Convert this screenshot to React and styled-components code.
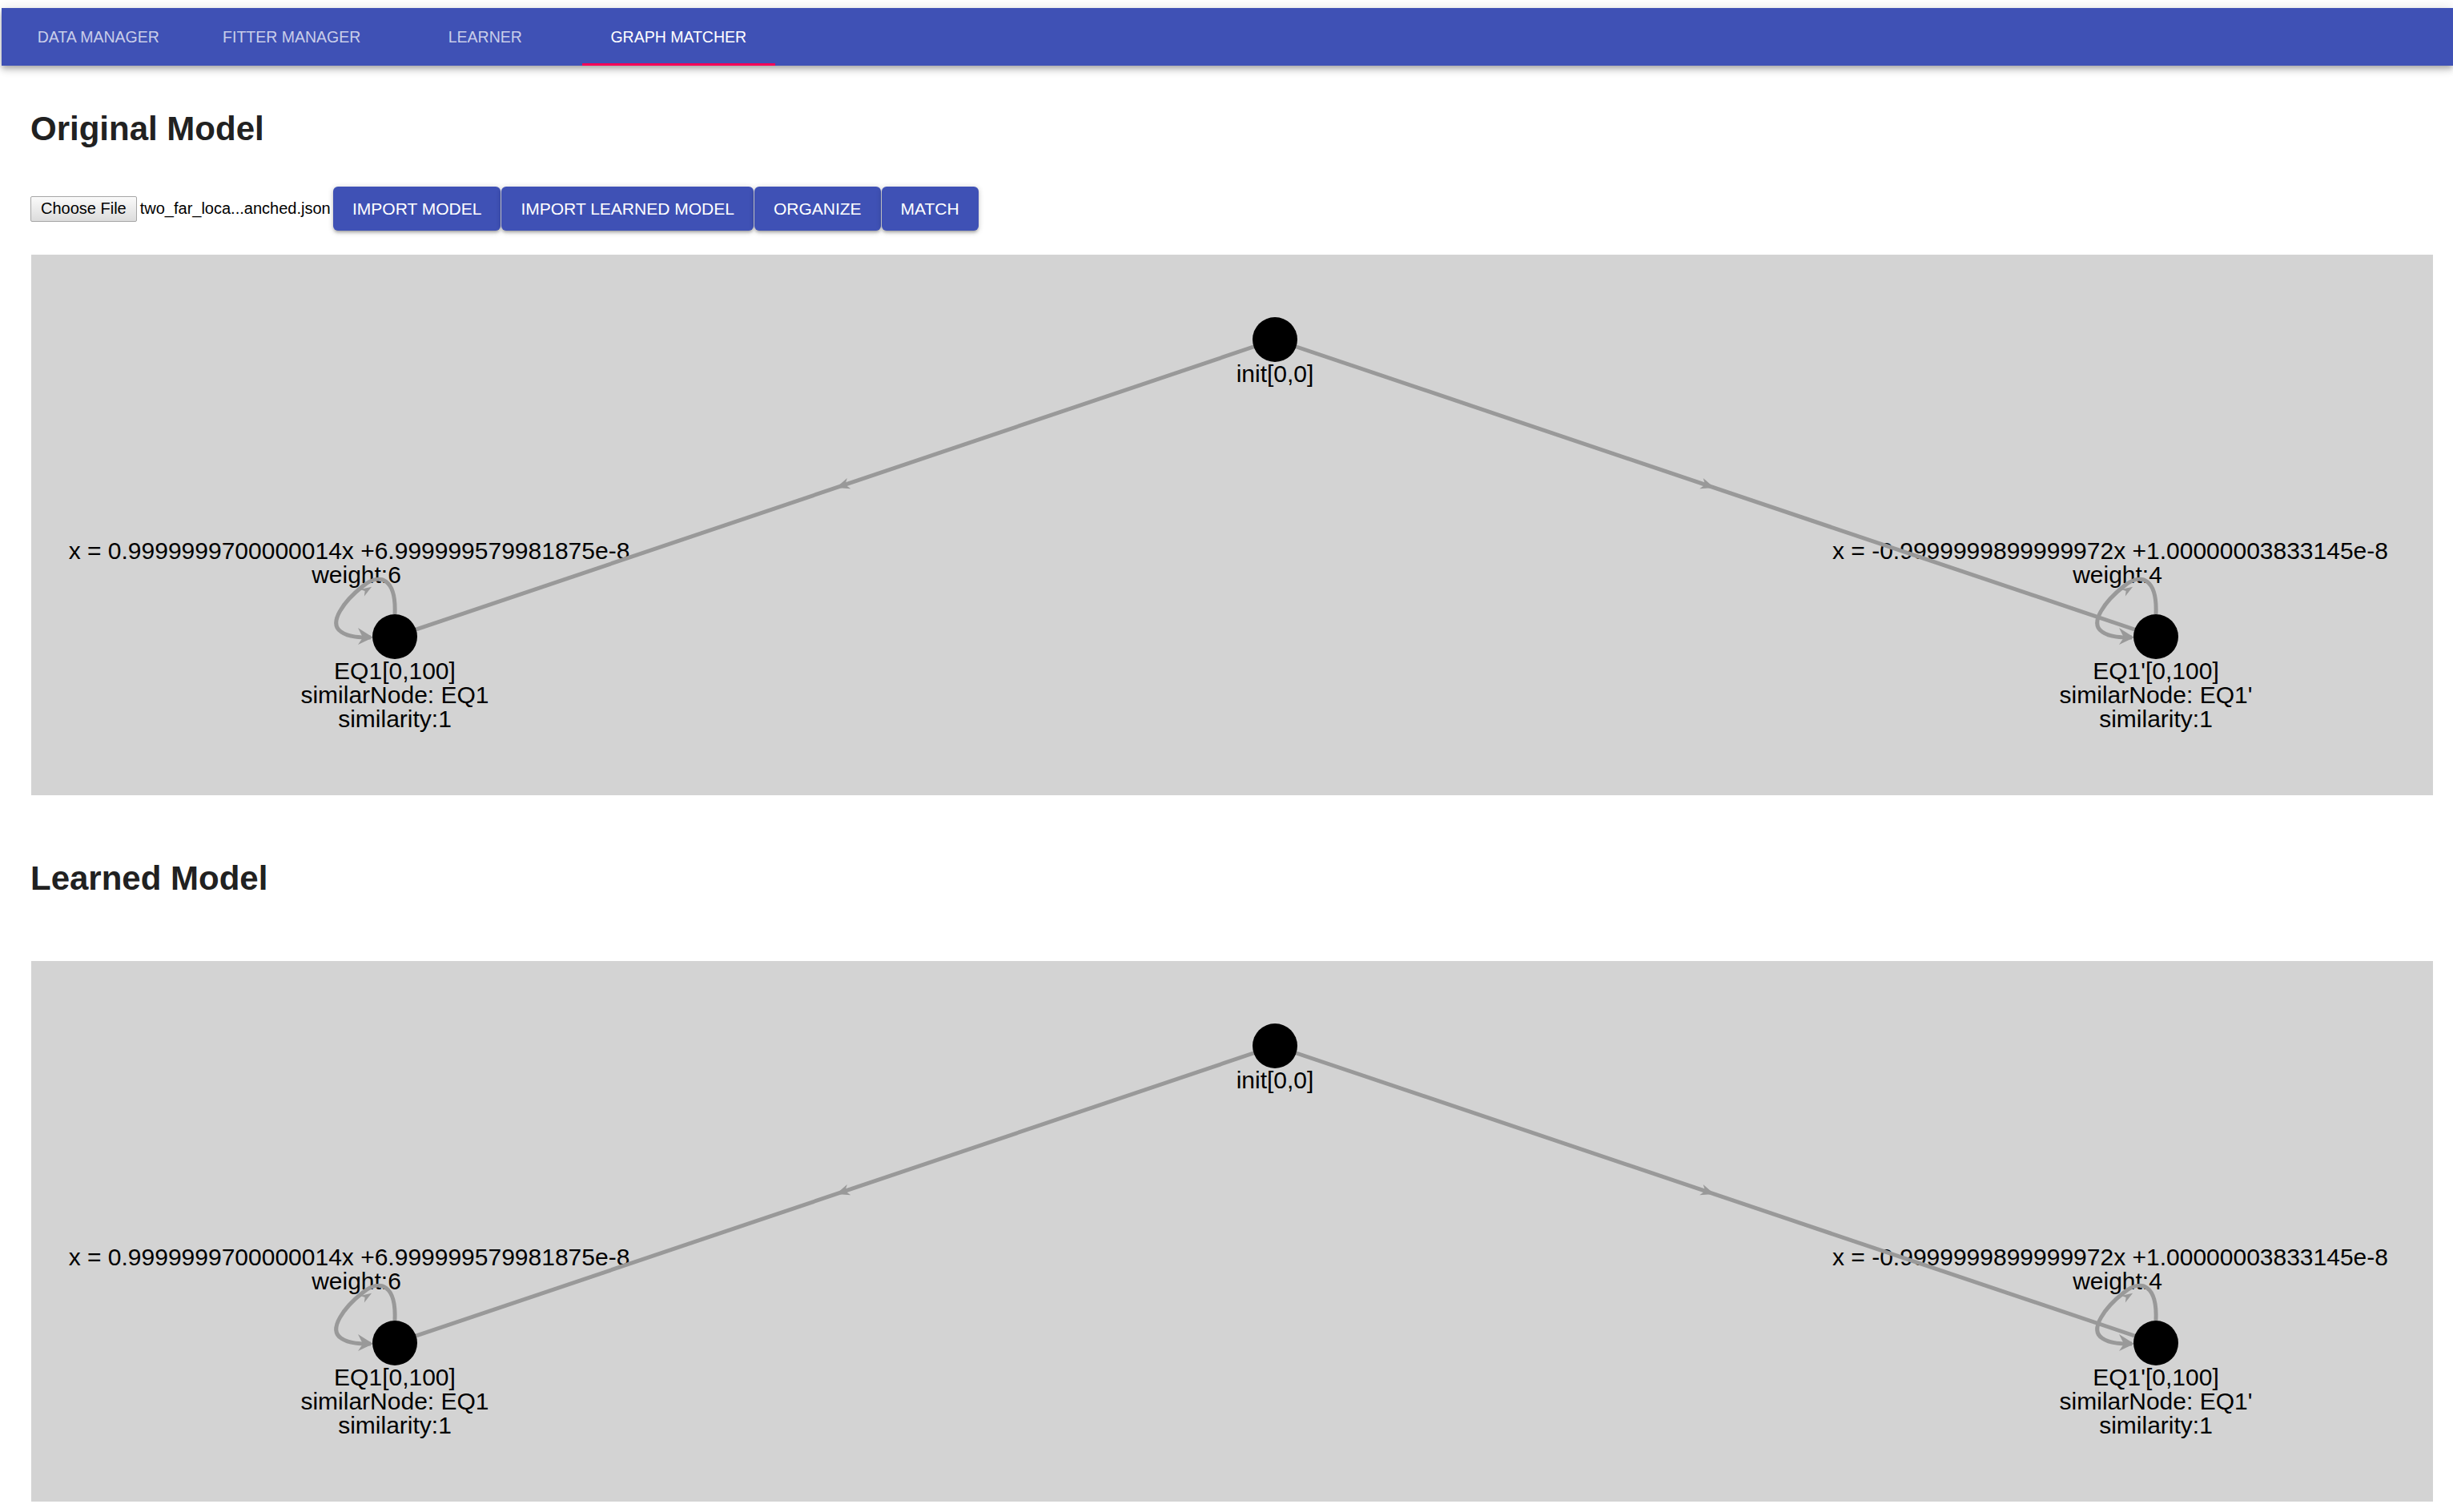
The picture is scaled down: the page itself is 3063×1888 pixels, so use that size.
import React from 'react';
import styled, { createGlobalStyle, css } from 'styled-components';

const FONT = '"Liberation Sans", Arial, Helvetica, sans-serif';

const GlobalStyle = createGlobalStyle`
  html, body { margin: 0; padding: 0; background: #ffffff; }
  body { font-family: ${FONT}; overflow: hidden; }
  * { box-sizing: border-box; }
`;

const Page = styled.div`
  padding-top: 10px;
`;

const AppBar = styled.header`
  position: relative;
  z-index: 2;
  margin-left: 2px;
  height: 72px;
  display: flex;
  background: #3f51b5;
  box-shadow: 0 3px 6px -1px rgba(0, 0, 0, 0.2), 0 6px 8px 0 rgba(0, 0, 0, 0.14),
    0 1px 15px 0 rgba(0, 0, 0, 0.12);
`;

const Tab = styled.div`
  position: relative;
  width: 241.5px;
  display: flex;
  align-items: center;
  justify-content: center;
  font-family: ${FONT};
  font-size: 19.5px;
  text-transform: uppercase;
  color: ${(p) => (p.$active ? '#ffffff' : 'rgba(255, 255, 255, 0.72)')};
  ${(p) =>
    p.$active &&
    css`
      &::after {
        content: '';
        position: absolute;
        left: 0;
        right: 0;
        bottom: 0;
        height: 3px;
        background: #f50057;
      }
    `}
`;

const Main = styled.main`
  padding-left: 38px;
`;

const SectionTitle = styled.h2`
  margin: ${(p) => p.$top}px 0 0;
  font-family: ${FONT};
  font-weight: bold;
  font-size: 42px;
  line-height: 48px;
  color: #212121;
`;

const Toolbar = styled.div`
  margin-top: 48px;
  height: 55px;
  display: flex;
  align-items: center;
  gap: 1px;
`;

const FileField = styled.div`
  width: 377px;
  display: flex;
  align-items: center;
  font-family: ${FONT};
  font-size: 20px;
  color: #000;
`;

const ChooseButton = styled.span`
  height: 32px;
  padding: 0 12px;
  display: inline-flex;
  align-items: center;
  border: 1px solid #a6a6a6;
  border-radius: 2px;
  background: linear-gradient(#fafafa, #dcdcdc);
  color: #000;
  white-space: nowrap;
`;

const FileName = styled.span`
  margin-left: 4px;
  white-space: nowrap;
`;

const ActionButton = styled.button`
  height: 55px;
  padding: 0 24px;
  border: 0;
  border-radius: 6px;
  background: #3f51b5;
  color: #ffffff;
  font-family: ${FONT};
  font-size: 21px;
  text-transform: uppercase;
  white-space: nowrap;
  cursor: pointer;
  box-shadow: 0 1.5px 7px 0 rgba(0, 0, 0, 0.2), 0 3px 3px 0 rgba(0, 0, 0, 0.14),
    0 4px 1.5px -3px rgba(0, 0, 0, 0.12);
`;

const Panel = styled.div`
  margin-top: ${(p) => p.$top}px;
  margin-left: 1px;
  width: 2999px;
  height: 675px;
  background: #d3d3d3;
  overflow: hidden;
`;

const GraphSvg = styled.svg`
  display: block;
`;

const Label = styled.text`
  font-family: ${FONT};
  font-size: 30px;
  fill: #000;
`;

const EDGE = '#999999';

const graphData = {
  nodes: [
    { id: 'init', x: 1553, y: 106, lines: ['init[0,0]'] },
    { id: 'eq1', x: 454, y: 477, lines: ['EQ1[0,100]', 'similarNode: EQ1', 'similarity:1'] },
    { id: 'eq1p', x: 2653, y: 477, lines: ["EQ1'[0,100]", "similarNode: EQ1'", 'similarity:1'] },
  ],
  edges: [
    { from: 'init', to: 'eq1' },
    { from: 'init', to: 'eq1p' },
  ],
  loops: [
    { node: 'eq1', expr: 'x = 0.9999999700000014x +6.999999579981875e-8', weight: 'weight:6' },
    { node: 'eq1p', expr: 'x = -0.9999999899999972x +1.00000003833145e-8', weight: 'weight:4' },
  ],
};

const LOOP_PATH =
  'M 0 -28 C 2 -72, -18 -81, -40 -63 C -63 -45, -84 -17, -67 -6 C -57 1, -42 1, -30 1';

function Graph({ data }) {
  const byId = Object.fromEntries(data.nodes.map((n) => [n.id, n]));
  return (
    <GraphSvg width="2999" height="675" viewBox="0 0 2999 675">
      {data.loops.map((l) => {
        const n = byId[l.node];
        return (
          <g key={`lbl-${l.node}`}>
            <Label x={n.x - 57} y={n.y - 97} textAnchor="middle">
              {l.expr}
            </Label>
            <Label x={n.x - 48} y={n.y - 67} textAnchor="middle">
              {l.weight}
            </Label>
          </g>
        );
      })}
      {data.edges.map((e) => {
        const a = byId[e.from];
        const b = byId[e.to];
        const mx = (a.x + b.x) / 2 + (a.x > b.x ? 9 : -9);
        const my = (a.y + b.y) / 2 - 3;
        const ang = (Math.atan2(b.y - a.y, b.x - a.x) * 180) / Math.PI;
        return (
          <g key={`${e.from}-${e.to}`}>
            <line x1={a.x} y1={a.y} x2={b.x} y2={b.y} stroke={EDGE} strokeWidth="5" />
            <polygon
              points="-9,-7 8,0 -9,7 -4,0"
              fill={EDGE}
              transform={`translate(${mx} ${my}) rotate(${ang})`}
            />
          </g>
        );
      })}
      {data.loops.map((l) => {
        const n = byId[l.node];
        return (
          <g key={`loop-${l.node}`} transform={`translate(${n.x} ${n.y})`}>
            <path d={LOOP_PATH} fill="none" stroke={EDGE} strokeWidth="5" />
            <polygon points="-46,-11 -27,1 -46,10 -40,1" fill={EDGE} />
            <polygon points="-8,-5 6,0 -8,5 -4,0" fill={EDGE} transform="translate(-34 -59) rotate(-32)" />
          </g>
        );
      })}
      {data.nodes.map((n) => (
        <circle key={`c-${n.id}`} cx={n.x} cy={n.y} r="28" fill="#000" />
      ))}
      {data.nodes.map((n) => (
        <Label key={`t-${n.id}`} x={n.x} y={n.y + 53} textAnchor="middle">
          {n.lines.map((line, i) => (
            <tspan key={i} x={n.x} y={n.y + 53 + i * 30}>
              {line}
            </tspan>
          ))}
        </Label>
      ))}
    </GraphSvg>
  );
}

const tabs = ['Data Manager', 'Fitter Manager', 'Learner', 'Graph Matcher'];
const actions = ['Import Model', 'Import Learned Model', 'Organize', 'Match'];

export default function App() {
  return (
    <Page>
      <GlobalStyle />
      <AppBar>
        {tabs.map((t, i) => (
          <Tab key={t} $active={i === 3}>
            {t}
          </Tab>
        ))}
      </AppBar>
      <Main>
        <SectionTitle $top={55}>Original Model</SectionTitle>
        <Toolbar>
          <FileField>
            <ChooseButton>Choose File</ChooseButton>
            <FileName>two_far_loca...anched.json</FileName>
          </FileField>
          {actions.map((a) => (
            <ActionButton key={a}>{a}</ActionButton>
          ))}
        </Toolbar>
        <Panel $top={30}>
          <Graph data={graphData} />
        </Panel>
        <SectionTitle $top={80}>Learned Model</SectionTitle>
        <Panel $top={79}>
          <Graph data={graphData} />
        </Panel>
      </Main>
    </Page>
  );
}
